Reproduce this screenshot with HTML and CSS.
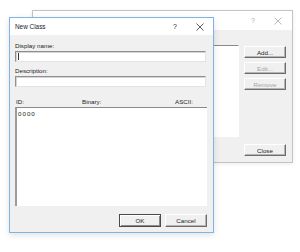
FILE: index.html
```html
<!DOCTYPE html>
<html>
<head>
<meta charset="utf-8">
<link rel="stylesheet" href="styles.css">
</head>
<body>
<div class="desktop">
  <div class="win back">
    <div class="titlebar">
      <span class="title"></span>
      <span class="tctl help">?</span>
      <span class="tctl close"><svg width="8" height="8" viewBox="0 0 8 8"><path d="M0.5 0.5L7.5 7.5M7.5 0.5L0.5 7.5" stroke="#a8a8a8" stroke-width="0.8" fill="none"/></svg></span>
    </div>
    <div class="back-body">
      <div class="back-left"><div class="listbox"></div></div>
      <div class="back-btns">
        <button class="btn">Add...</button>
        <button class="btn dis">Edit...</button>
        <button class="btn dis">Remove</button>
        <button class="btn last">Close</button>
      </div>
    </div>
  </div>

  <div class="win front">
    <div class="titlebar">
      <span class="title">New Class</span>
      <span class="tctl help">?</span>
      <span class="tctl close"><svg width="8" height="8" viewBox="0 0 8 8"><path d="M0.5 0.5L7.5 7.5M7.5 0.5L0.5 7.5" stroke="#333" stroke-width="0.8" fill="none"/></svg></span>
    </div>
    <div class="front-body">
      <label class="lbl first">Display name:</label>
      <div class="input"><span class="caret"></span></div>
      <label class="lbl second">Description:</label>
      <div class="input"></div>
      <div class="hdr">
        <span class="h-id">ID:</span>
        <span class="h-bin">Binary:</span>
        <span class="h-ascii">ASCII:</span>
      </div>
      <div class="textarea"><span class="val">0000</span></div>
      <div class="actions">
        <button class="btn default">OK</button>
        <button class="btn">Cancel</button>
      </div>
    </div>
  </div>
</div>
</body>
</html>
```
FILE: styles.css
```css
* { box-sizing: border-box; }
html, body { margin: 0; padding: 0; background: #fff; }
body { font-family: "Liberation Sans", Arial, sans-serif; font-size: 6.2px; color: #222; }
.desktop { position: relative; width: 300px; height: 252px; overflow: hidden; }

.win { position: absolute; display: flex; flex-direction: column; background: #f0f0f0; }
.back { left: 32px; top: 10px; width: 261px; height: 153px; border: 1px solid #c4c4c4; box-shadow: 0 1px 4px rgba(0,0,0,0.08); }
.front { left: 9px; top: 17px; width: 205px; height: 216px; border: 1px solid #7fb2e5; box-shadow: 0 2px 6px rgba(0,0,0,0.12); }

.titlebar { background: #fff; display: flex; align-items: center; flex: none; }
.back .titlebar { height: 19px; }
.front .titlebar { height: 17px; padding-left: 5px; }
.title { flex: 1; font-size: 6.4px; color: #222; }
.tctl { display: flex; align-items: center; justify-content: center; font-size: 7px; }
.back .tctl { color: #a8a8a8; }
.back .help { width: 12px; margin-right: 13px; }
.back .close { width: 12px; margin-right: 8px; }
.front .help { width: 12px; margin-right: 13px; }
.front .close { width: 12px; margin-right: 7px; }

.back-body { flex: 1; display: flex; gap: 5px; padding: 15px 6px 6px 7px; }
.back-left { flex: 1; }
.listbox { height: 92px; background: #fff; border-top: 1px solid #8a8a8a; border-left: 1px solid #8a8a8a; border-right: 1px solid #fff; border-bottom: 1px solid #fff; }
.back-btns { width: 42px; display: flex; flex-direction: column; gap: 4px; padding-top: 1px; }
.back-btns .last { margin-top: auto; }

.btn { font-family: inherit; font-size: 6.2px; color: #222; height: 12px; padding: 0; background: #f0f0f0;
  border: 1px solid; border-color: #fff #6d6d6d #6d6d6d #fff; box-shadow: inset -1px -1px 0 #b4b4b4; }
.btn.dis { color: #a5a5a5; }
.btn.default { border-color: #4a4a4a; box-shadow: inset 1px 1px 0 #fff, inset -1px -1px 0 #8c8c8c; }

.front-body { flex: 1; display: flex; flex-direction: column; padding: 7px 6px 5px 5px; }
.lbl { display: block; height: 8px; line-height: 8px; }
.lbl.second { margin-top: 5px; }
.input { height: 11px; margin-top: 1px; margin-right: 1px; background: #fff; border: 1px solid; border-color: #8f8f8f #e3e3e3 #e3e3e3 #8f8f8f; box-shadow: inset 1px 1px 0 #d4d4d4; position: relative; }
.caret { position: absolute; left: 2px; top: 1px; width: 1px; height: 7px; background: #333; }
.hdr { margin-top: 11px; height: 9px; line-height: 8px; display: flex; padding-left: 1px; }
.h-id { width: 66px; }
.h-bin { flex: 1; }
.h-ascii { padding-right: 14px; }
.textarea { flex: 1; background: #fff; border-top: 1px solid #8a8a8a; border-left: 2px solid #9c9c9c; padding: 2px 0 0 1px; color: #222; font-size: 6.2px; letter-spacing: 1px; line-height: 7px; }
.actions { flex: none; display: flex; justify-content: flex-end; gap: 4px; margin-top: 8px; }
.actions .btn { width: 42px; height: 13px; }
```
